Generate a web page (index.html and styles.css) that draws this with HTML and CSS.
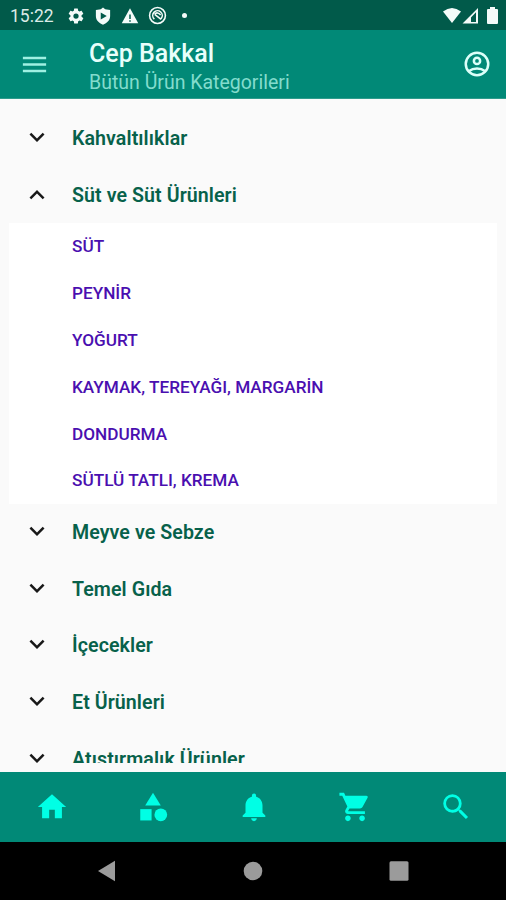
FILE: index.html
```html
<!DOCTYPE html>
<html lang="tr">
<head>
<meta charset="utf-8">
<title>Cep Bakkal</title>
<link rel="stylesheet" href="styles.css">
</head>
<body>
<div class="screen">
  <div class="status">
    <span class="clock">15:22</span>
    <div class="status-left">
      <svg width="18" height="18" viewBox="0 0 24 24"><path d="M19.4 13a7.500 7.500 0 0 0 0-2l2.100-1.650c.2-.15.250-.4.120-.64l-2-3.460c-.12-.22-.39-.3-.61-.22l-2.490 1a7.300 7.300 0 0 0-1.690-.98l-.38-2.650A.5.5 0 0 0 14 2h-4a.5.5 0 0 0-.49.420l-.38 2.650c-.61.250-1.170.59-1.690.98l-2.490-1c-.23-.09-.49 0-.61.220l-2 3.460c-.13.220-.07.490.12.640L4.570 11a7.900 7.900 0 0 0 0 2l-2.110 1.650c-.19.150-.24.420-.12.640l2 3.460c.12.220.39.3.61.220l2.490-1c.52.400 1.080.730 1.690.980l.38 2.650c.03.240.24.400.49.400h4c.25 0 .46-.16.490-.4l.38-2.650a7.300 7.300 0 0 0 1.690-.98l2.490 1c.23.090.49 0 .61-.22l2-3.460c.12-.22.07-.49-.12-.64zM12 15.500a3.500 3.500 0 1 1 0-7 3.500 3.500 0 0 1 0 7z"/></svg>
      <svg width="18" height="18" viewBox="0 0 24 24"><path fill-rule="evenodd" d="M12 .8 9 3 2.500 4v8c0 5.500 4 9.500 9.500 11.500 5.500-2 9.500-6 9.500-11.500V4L15 3zM9 7.200v9.600l8-4.800z"/></svg>
      <svg width="18" height="18" viewBox="0 0 24 24"><path fill-rule="evenodd" d="M1 21.500h22L12 1.500zm10-5.500h2v-6h-2zm0 3.500h2v-2h-2z"/></svg>
      <svg width="19" height="19" viewBox="0 0 24 24"><g fill="none" stroke="currentColor" stroke-width="2"><circle cx="12" cy="12" r="10"/><path d="M8 16.500a6 6 0 1 1 8.500-.5M8.500 10.500 16.500 17"/><path d="M8.500 10.500c2-3 5-2 7.500 1"/></g></svg>
      <i class="dot"></i>
    </div>
    <div class="status-right">
      <svg width="20" height="17" viewBox="0 0 20 17"><path d="M1 4.500Q10-2.500 19 4.500L10 16z"/></svg>
      <svg width="17" height="17" viewBox="0 0 17 17"><path fill-rule="evenodd" d="M.5 16.500 16 1v15.500zM9 10.500v4.500h5V5.200z"/></svg>
      <svg width="11" height="17" viewBox="0 0 11 17"><path d="M3 0h5v2h2q1 0 1 1v13q0 1-1 1H1q-1 0-1-1V3q0-1 1-1h2z"/></svg>
    </div>
  </div>
  <header class="appbar">
    <svg class="menu" width="31" height="31" viewBox="0 0 24 24"><path d="M3 18h18v-2H3zm0-5h18v-2H3zm0-7v2h18V6z"/></svg>
    <div class="titles">
      <h1>Cep Bakkal</h1>
      <p>Bütün Ürün Kategorileri</p>
    </div>
    <svg class="account" width="30" height="30" viewBox="0 0 24 24"><g fill="none" stroke="currentColor" stroke-width="2"><circle cx="12" cy="12" r="9"/><circle cx="12" cy="9.500" r="2.500"/><path d="M5.700 17.600c1.700-1.400 4-2.100 6.300-2.100s4.600.7 6.300 2.100"/></g></svg>
  </header>
  <main class="list">
    <div class="row"><svg class="chev" viewBox="0 0 24 24"><path d="M16.590 8.590 12 13.170 7.410 8.590 6 10l6 6 6-6z"/></svg><span>Kahvaltılıklar</span></div>
    <div class="row open"><svg class="chev" viewBox="0 0 24 24"><path d="m12 8-6 6 1.410 1.410L12 10.830l4.590 4.580L18 14z"/></svg><span>Süt ve Süt Ürünleri</span></div>
    <ul class="panel">
      <li>SÜT</li>
      <li>PEYNİR</li>
      <li>YOĞURT</li>
      <li>KAYMAK, TEREYAĞI, MARGARİN</li>
      <li>DONDURMA</li>
      <li>SÜTLÜ TATLI, KREMA</li>
    </ul>
    <div class="row"><svg class="chev" viewBox="0 0 24 24"><path d="M16.590 8.590 12 13.170 7.410 8.590 6 10l6 6 6-6z"/></svg><span>Meyve ve Sebze</span></div>
    <div class="row"><svg class="chev" viewBox="0 0 24 24"><path d="M16.590 8.590 12 13.170 7.410 8.590 6 10l6 6 6-6z"/></svg><span>Temel Gıda</span></div>
    <div class="row"><svg class="chev" viewBox="0 0 24 24"><path d="M16.590 8.590 12 13.170 7.410 8.590 6 10l6 6 6-6z"/></svg><span>İçecekler</span></div>
    <div class="row"><svg class="chev" viewBox="0 0 24 24"><path d="M16.590 8.590 12 13.170 7.410 8.590 6 10l6 6 6-6z"/></svg><span>Et Ürünleri</span></div>
    <div class="row"><svg class="chev" viewBox="0 0 24 24"><path d="M16.590 8.590 12 13.170 7.410 8.590 6 10l6 6 6-6z"/></svg><span>Atıştırmalık Ürünler</span></div>
  </main>
  <nav class="tabs">
    <svg viewBox="0 0 24 24"><path d="M10 20v-6h4v6h5v-8h3L12 3 2 12h3v8z"/></svg>
    <svg viewBox="0 0 24 24"><path d="m12 2-5.500 9h11z"/><circle cx="17.500" cy="17.500" r="4.500"/><path d="M3 13.500h8v8H3z"/></svg>
    <svg viewBox="0 0 24 24"><path d="M12 22c1.100 0 2-.9 2-2h-4c0 1.100.9 2 2 2zm6-6v-5c0-3.070-1.640-5.640-4.500-6.320V4a1.500 1.500 0 0 0-3 0v.680C7.630 5.360 6 7.920 6 11v5l-2 2v1h16v-1z"/></svg>
    <svg viewBox="0 0 24 24"><path d="M7 18c-1.100 0-1.990.9-1.990 2S5.900 22 7 22s2-.9 2-2-.9-2-2-2zM1 2v2h2l3.600 7.590-1.350 2.450c-.16.280-.25.610-.25.960 0 1.100.9 2 2 2h12v-2H7.420c-.14 0-.25-.11-.25-.25l.03-.12.900-1.630h7.450c.75 0 1.410-.41 1.750-1.030l3.580-6.490A1 1 0 0 0 20 4H5.210l-.94-2zm16 16c-1.100 0-1.990.9-1.990 2s.89 2 1.990 2 2-.9 2-2-.9-2-2-2z"/></svg>
    <svg viewBox="0 0 24 24"><path d="M15.500 14h-.79l-.28-.27A6.470 6.470 0 0 0 16 9.500 6.500 6.500 0 1 0 9.500 16c1.610 0 3.090-.59 4.230-1.570l.27.280v.79l5 4.990L20.490 19zm-6 0C7.010 14 5 11.990 5 9.500S7.010 5 9.500 5 14 7.010 14 9.500 11.990 14 9.500 14z"/></svg>
  </nav>
  <div class="sysnav">
    <svg width="20" height="22" viewBox="0 0 20 22"><path d="M1 11 18 .8v20.400z"/></svg>
    <svg width="20" height="22" viewBox="0 0 20 22"><circle cx="10" cy="11" r="9.300"/></svg>
    <svg width="20" height="22" viewBox="0 0 20 22"><rect x=".5" y="1.300" width="19" height="19.400" rx="1.500"/></svg>
  </div>
</div>
</body>
</html>
```
FILE: styles.css
```css
* { box-sizing: border-box; margin: 0; padding: 0; }
body { font-family: Roboto, "Noto Sans", sans-serif; background: #fafafa; }
svg { display: block; flex: none; fill: currentColor; }
.screen { width: 506px; height: 900px; display: flex; flex-direction: column; overflow: hidden; }

.status { height: 30px; flex: none; background: #015a4a; color: #f4fbf9; display: flex; align-items: center; padding: 1px 8px 0 10px; }
.clock { width: 44px; font-size: 17.5px; line-height: 20px; color: #dcebe7; }
.status-left { display: flex; align-items: center; gap: 9px; margin-left: 13px; }
.dot { width: 5px; height: 5px; border-radius: 50%; background: currentColor; margin-left: 6px; }
.status-right { display: flex; align-items: center; margin-left: auto; }
.status-right svg + svg { margin-left: 0; }
.status-right svg:last-child { margin-left: 8px; }

.appbar { height: 69px; flex: none; background: #018977; display: flex; align-items: center; padding: 0 14px 0 19px; border-bottom: 1px solid #2e9b8c; }
.menu { color: #9ff0e2; }
.titles { margin-left: 39px; flex: 1; padding-top: 7px; }
.titles h1 { font-size: 25px; line-height: 30px; font-weight: 500; color: #e8fffb; white-space: nowrap; }
.titles p { font-size: 19.5px; line-height: 28px; color: #83dccd; white-space: nowrap; }
.account { color: #dcfff9; }

.list { height: 664px; flex: none; padding-top: 11px; overflow: hidden; }
.row { height: 56.7px; display: flex; align-items: center; padding-left: 22px; font-size: 19.6px; font-weight: 600; letter-spacing: .08px; line-height: 24px; color: #07614a; white-space: nowrap; }
.row span { margin-left: 20px; padding-top: 1px; }
.chev { width: 30px; height: 30px; color: #181818; margin-bottom: 3px; }
.open .chev { margin-bottom: 0; }
.panel { list-style: none; margin: 0 9px; background: #fff; }
.panel li { height: 46.8px; padding-left: 63px; font-size: 17.2px; line-height: 46px; font-weight: 500; color: #4a0fb0; white-space: nowrap; }

.tabs { height: 70px; flex: none; margin-top: 9px; background: #018977; color: #00ffe5; display: grid; grid-template-columns: repeat(5, 1fr); align-items: center; justify-items: center; padding-left: 1px; }
.tabs svg { width: 34px; height: 34px; }
.sysnav { flex: 1; background: #000; color: #9b9b9b; display: flex; align-items: center; justify-content: center; gap: 126px; }
```
